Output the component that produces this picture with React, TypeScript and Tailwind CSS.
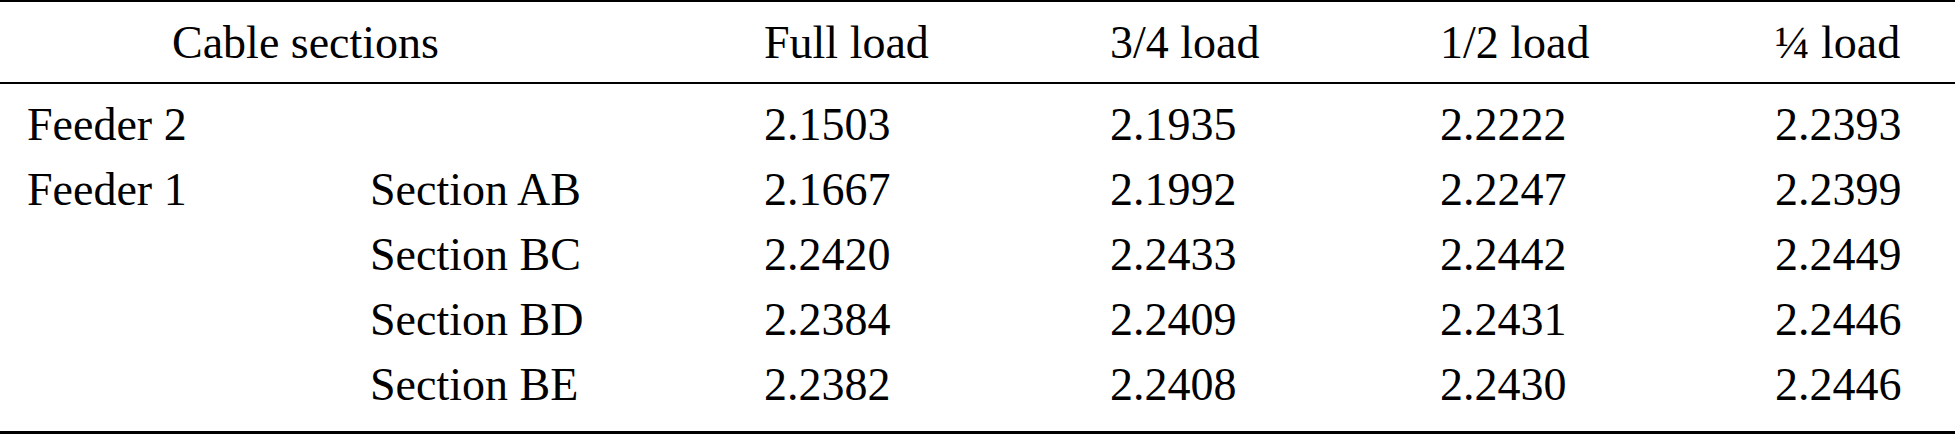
import React from "react";

const rows: [string, string, string, string, string, string][] = [
  ["Feeder 2", "", "2.1503", "2.1935", "2.2222", "2.2393"],
  ["Feeder 1", "Section AB", "2.1667", "2.1992", "2.2247", "2.2399"],
  ["", "Section BC", "2.2420", "2.2433", "2.2442", "2.2449"],
  ["", "Section BD", "2.2384", "2.2409", "2.2431", "2.2446"],
  ["", "Section BE", "2.2382", "2.2408", "2.2430", "2.2446"],
];

const grid =
  "grid grid-cols-[343px_394px_346px_330px_335px_1fr] pl-[27px] whitespace-nowrap";

export default function App() {
  return (
    <div className="w-[1955px] h-[434px] bg-white text-black [font-family:Liberation_Serif,Times_New_Roman,serif] text-[46px] leading-[65px] overflow-hidden">
      <div className="border-t-2 border-b-2 border-black pt-[8px] pb-[7px]">
        <div className={grid}>
          <div className="col-span-2 pl-[145px]">Cable sections</div>
          <div>Full load</div>
          <div>3/4 load</div>
          <div>1/2 load</div>
          <div>¼ load</div>
        </div>
      </div>
      <div className="pt-[8px] pb-[14px] border-b-[3px] border-black">
        {rows.map((r, i) => (
          <div key={i} className={grid}>
            {r.map((c, j) => (
              <div key={j}>{c}</div>
            ))}
          </div>
        ))}
      </div>
    </div>
  );
}
